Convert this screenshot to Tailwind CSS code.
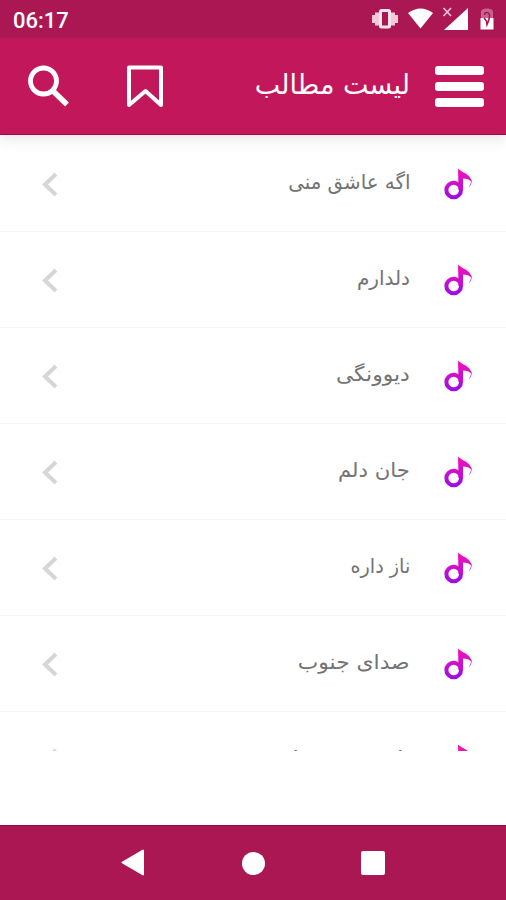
<!DOCTYPE html>
<html lang="fa">
<head>
  <meta charset="UTF-8" />
  <meta name="viewport" content="width=device-width, initial-scale=1" />
  <title>لیست مطالب</title>
  <script src="https://cdn.jsdelivr.net/npm/@tailwindcss/browser@4"></script>
</head>
<body class="bg-white h-[900px] flex flex-col overflow-hidden font-['DejaVu_Sans',sans-serif]">
  <!-- status bar -->
  <div class="h-[38px] shrink-0 bg-[#ab1753] flex items-center justify-between pl-[13px] pr-[11px] relative z-20">
    <span class="font-[Roboto,sans-serif] font-medium text-[22px] leading-none text-white pt-[3px]">06:17</span>
    <svg class="w-[126px] h-[38px]" viewBox="369 0 126 38">
      <g fill="#f3c9da">
        <rect x="372" y="15" width="3" height="8" />
        <rect x="375" y="12.500" width="4" height="13" />
        <rect x="391" y="12.500" width="4" height="13" />
        <rect x="395" y="15" width="3" height="8" />
      </g>
      <rect x="380.500" y="10.500" width="9" height="16.500" rx="1" fill="none" stroke="#fbe4ed" stroke-width="3" />
      <path d="M408 13 Q420.500 4 433 13 L420.500 28.500 Z" fill="#fff" />
      <path d="M468 8 V30 H444 Z" fill="#fff" />
      <path d="M443.500 8 L451 16 M451 8 L443.500 16" stroke="#f3c9da" stroke-width="1.600" />
      <path d="M481 18 V12 Q481 8.500 487 8.500 Q493 8.500 493 12 V18 Z" fill="#c7648d" />
      <path d="M480.500 18 H493.500 V29.500 H480.500 Z" fill="#fff" />
      <path d="M484.500 15 Q484.500 12.500 487 12.500 Q490 12.500 489.500 17 L488.500 21 L487 24.500 L486.500 21 L484 18" fill="none" stroke="#ab1753" stroke-width="1.600" />
    </svg>
  </div>

  <!-- app bar -->
  <header class="h-[97px] shrink-0 bg-[#c2185b] border-b border-[#b3004a] flex items-center justify-between pl-[27px] pr-[22px] relative z-10 shadow-[0_5px_12px_rgba(0,0,0,0.09)]">
    <div class="flex items-center gap-[56px]">
      <svg class="w-[43px] h-[43px]" viewBox="0 0 43 43" fill="none" stroke="#fff">
        <circle cx="16.500" cy="16" r="13" stroke-width="4.800" />
        <path d="M26 26 L40 39.500" stroke-width="5.500" />
      </svg>
      <svg class="w-[38px] h-[43px]" viewBox="0 0 38 43" fill="none" stroke="#fff" stroke-width="4" stroke-linejoin="round">
        <path d="M3 2.500 H35 V40 L19.500 26 L3 40 Z" />
      </svg>
    </div>
    <div class="flex items-center gap-[25px]">
      <h1 dir="rtl" class="text-white text-[27px] leading-none whitespace-nowrap pb-1">لیست مطالب</h1>
      <div class="flex flex-col gap-[7px]">
        <div class="w-[49px] h-[9px] rounded-[3px] bg-white"></div>
        <div class="w-[49px] h-[9px] rounded-[3px] bg-white"></div>
        <div class="w-[49px] h-[9px] rounded-[3px] bg-white"></div>
      </div>
    </div>
  </header>

  <!-- list -->
  <ul id="list" class="h-[616px] shrink-0 overflow-hidden pt-[1px]"></ul>

  <!-- navigation bar -->
  <nav class="mt-auto h-[75px] shrink-0 bg-[#ab1753] border-t border-[#96003f] flex items-center justify-center gap-[96px]">
    <svg class="w-[25px] h-[28px]" viewBox="0 0 25 28"><path d="M1.500 13.500 L22 1.500 V25.500 Z" fill="#fff" stroke="#fff" stroke-width="2" stroke-linejoin="round" /></svg>
    <div class="w-[23px] h-[23px] rounded-full bg-white"></div>
    <div class="w-[24px] h-[24px] rounded-[2px] bg-white"></div>
  </nav>

  <template id="row">
    <li class="h-[96px] border-b border-[#f5f5f5] flex items-center pl-[41px] pr-[33px]">
      <svg class="w-[17px] h-[26px]" viewBox="0 0 17 26" fill="none" stroke="#d6d6d6" stroke-width="4">
        <path d="M15 3 L4 13.500 L15 24" />
      </svg>
      <span dir="rtl" class="ml-auto mr-[34px] text-[20px] leading-none text-[#737373] whitespace-nowrap pb-[4px] origin-right"></span>
      <svg class="w-[29px] h-[32px]" viewBox="0 0 29 32">
        <defs>
          <linearGradient id="note" gradientUnits="userSpaceOnUse" x1="0" y1="0" x2="0" y2="32">
            <stop offset="0" stop-color="#ff12b4" />
            <stop offset="1" stop-color="#9a08e8" />
          </linearGradient>
        </defs>
        <circle cx="9.700" cy="22" r="7.300" fill="none" stroke="url(#note)" stroke-width="4" />
        <path d="M14 0.500 C18 5 26 5 28 14 C25.500 11.500 23 10.500 19 10.500 V22 H14.500 Z" fill="url(#note)" />
        <path d="M27.500 12 Q27.500 16 25.500 18.500" fill="none" stroke="#e05ae0" stroke-width="1" />
      </svg>
    </li>
  </template>

  <script>
    const songs = [
      { title: "اگه عاشق منی", stretch: 0.99 },
      { title: "دلدارم", stretch: 1 },
      { title: "دیوونگی", stretch: 1.09 },
      { title: "جان دلم", stretch: 1.06 },
      { title: "ناز داره", stretch: 0.96 },
      { title: "صدای جنوب", stretch: 1.09 },
      { title: "با همسفر بیا", stretch: 1.14 }
    ];
    const list = document.getElementById("list");
    const row = document.getElementById("row");

    songs.forEach(song => {
      const item = row.content.cloneNode(true);
      const label = item.querySelector("span");
      label.innerText = song.title;
      label.style.transform = `scaleX(${song.stretch})`;
      list.appendChild(item);
    });
  </script>
</body>
</html>
